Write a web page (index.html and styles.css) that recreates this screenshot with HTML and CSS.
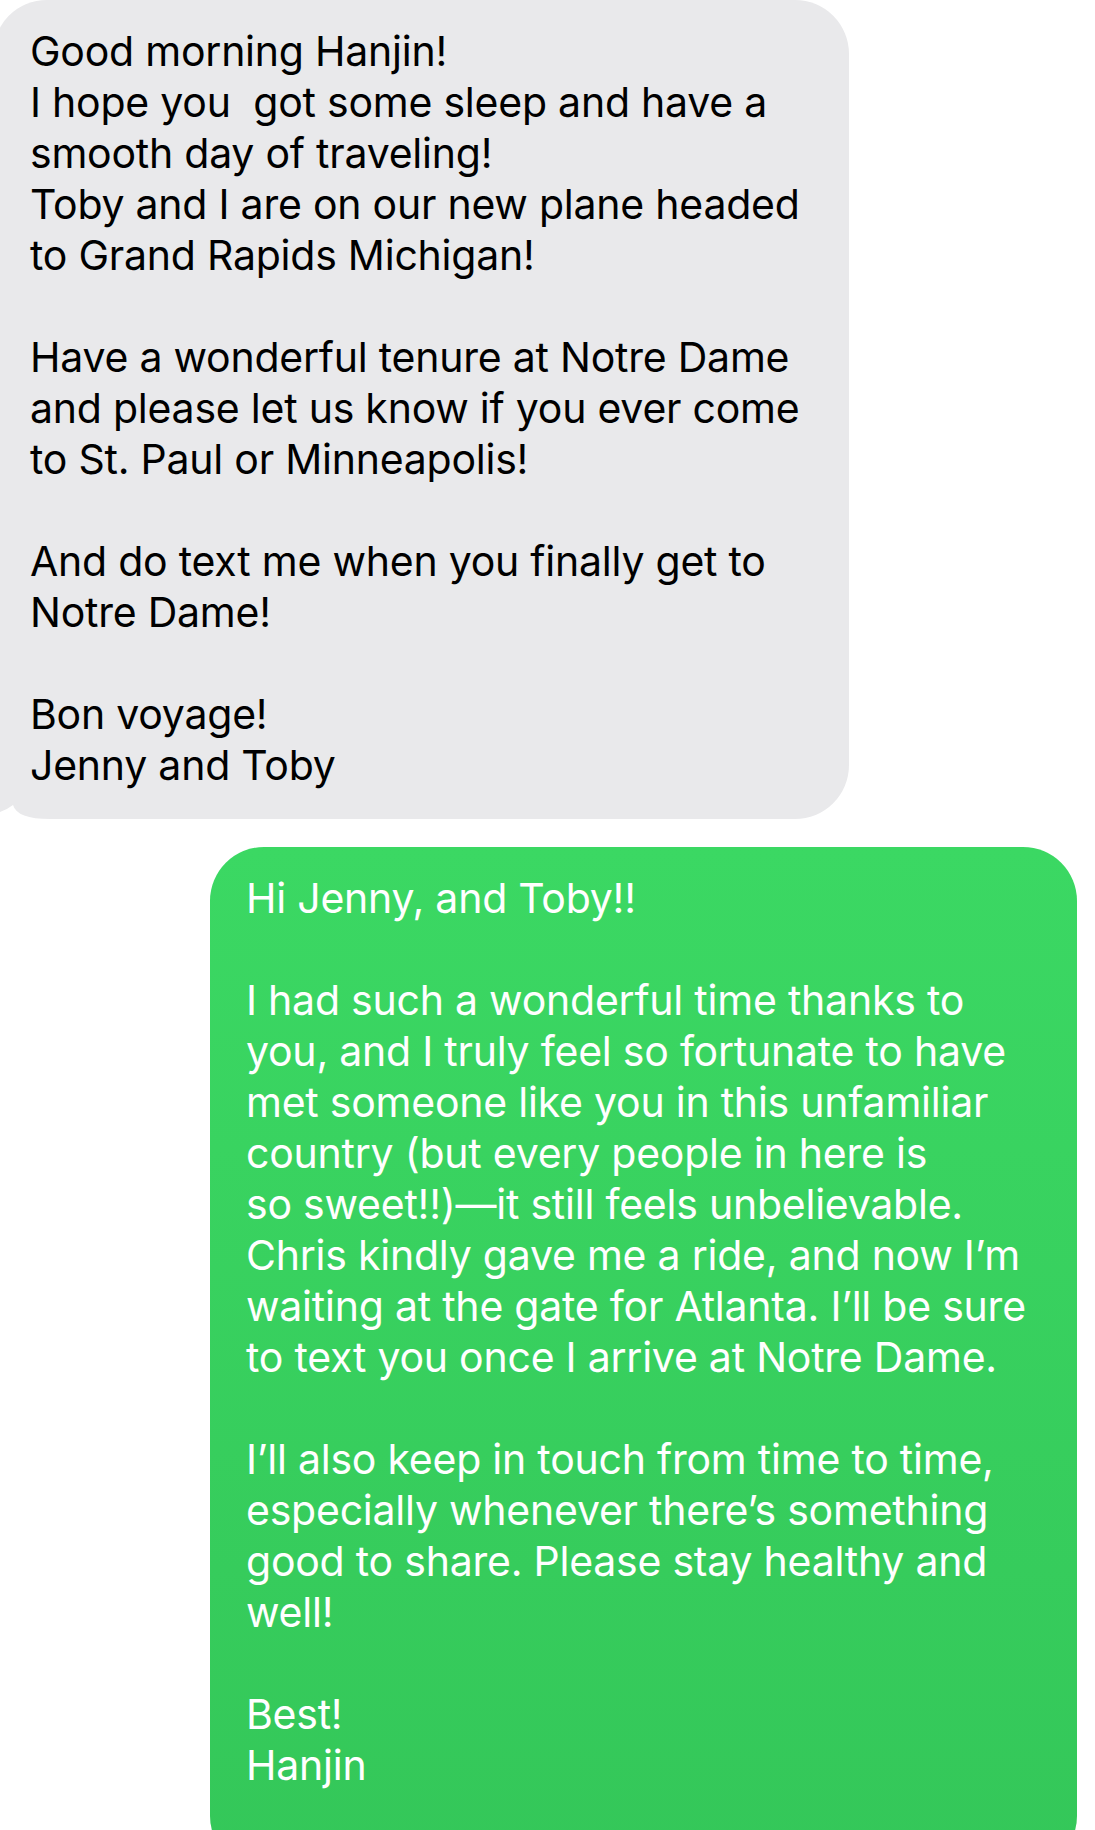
FILE: index.html
```html
<!DOCTYPE html>
<html lang="en">
<head>
<meta charset="utf-8">
<title>Messages</title>
<link rel="stylesheet" href="styles.css">
</head>
<body>
<main class="thread">
  <div class="bubble incoming">
    <p>Good morning Hanjin!<br>I hope you&nbsp; got some sleep and have a<br>smooth day of traveling!<br>Toby and I are on our new plane headed<br>to Grand Rapids Michigan!</p>
    <p>Have a wonderful tenure at Notre Dame<br>and please let us know if you ever come<br>to St. Paul or Minneapolis!</p>
    <p>And do text me when you finally get to<br>Notre Dame!</p>
    <p>Bon voyage!<br>Jenny and Toby</p>
    <svg class="tail-notch" width="50" height="14" viewBox="0 0 50 14" aria-hidden="true"><path d="M0 14 L0 7 Q8 4 13 0 Q17 14 50 14 Z" fill="#fff"/></svg>
  </div>
  <div class="bubble outgoing">
    <p>Hi Jenny, and Toby!!</p>
    <p>I had such a wonderful time thanks to<br>you, and I truly feel so fortunate to have<br>met someone like you in this unfamiliar<br>country (but every people in here is<br>so sweet!!)—it still feels unbelievable.<br>Chris kindly gave me a ride, and now I’m<br>waiting at the gate for Atlanta. I’ll be sure<br>to text you once I arrive at Notre Dame.</p>
    <p>I’ll also keep in touch from time to time,<br>especially whenever there’s something<br>good to share. Please stay healthy and<br>well!</p>
    <p>Best!<br>Hanjin</p>
  </div>
</main>
</body>
</html>
```
FILE: styles.css
```css
html, body {
  margin: 0;
  padding: 0;
  background: #ffffff;
}
body {
  width: 1095px;
  height: 1830px;
  overflow: hidden;
  font-family: Inter, "Noto Sans", sans-serif;
  font-size: 41px;
  line-height: 51px;
  letter-spacing: -0.23px;
  -webkit-font-smoothing: antialiased;
}
.thread {
  display: flex;
  flex-direction: column;
  gap: 28px;
}
.bubble {
  position: relative;
  display: flex;
  flex-direction: column;
  gap: 51px;
  box-sizing: border-box;
}
.bubble p {
  margin: 0;
  white-space: nowrap;
}
.incoming {
  margin-left: -7px;
  width: 856px;
  padding: 26px 0 28px 37px;
  background: #e9e9eb;
  color: #000;
  border-radius: 54px 54px 54px 0;
}
.tail-notch {
  position: absolute;
  left: 7px;
  bottom: 0;
  display: block;
}
.outgoing {
  margin-left: 210px;
  width: 867px;
  padding: 26px 0 79px 36px;
  background: linear-gradient(180deg, #3bd863 0%, #34c759 100%);
  color: #fff;
  border-radius: 54px;
}
```
